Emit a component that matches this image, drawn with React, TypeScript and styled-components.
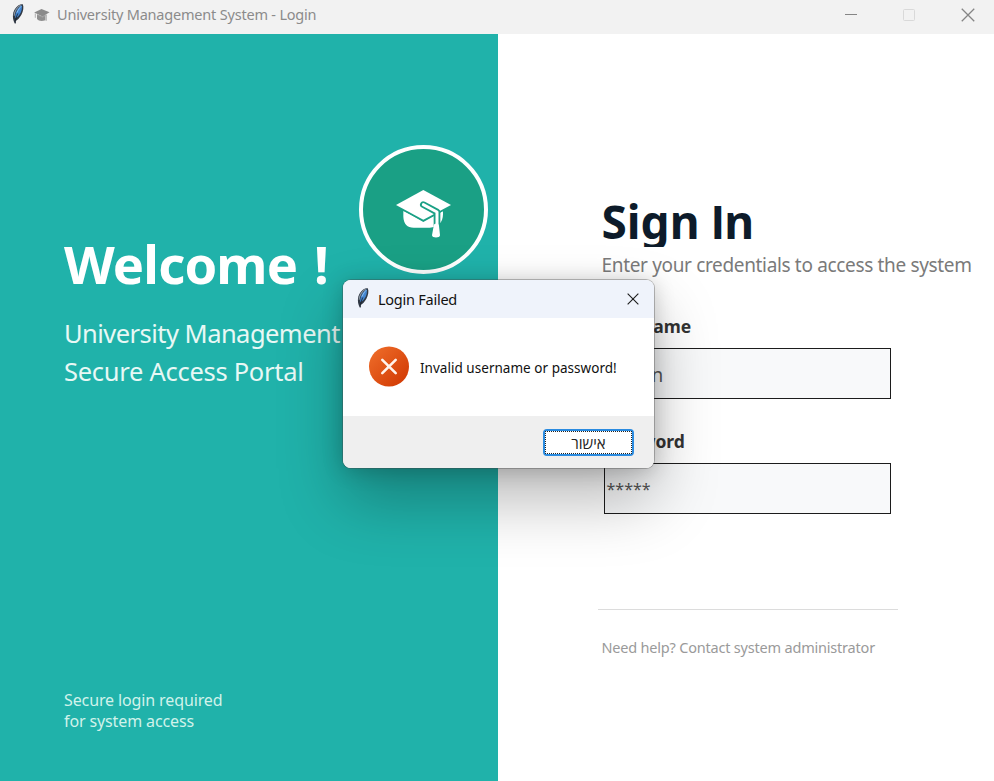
import React from "react";
import styled, { createGlobalStyle } from "styled-components";

const GlobalStyle = createGlobalStyle`
  * { box-sizing: border-box; }
  body { margin: 0; font-family: "Noto Sans", "Open Sans", sans-serif; overflow: hidden; }
  h1, h2, p { margin: 0; }
`;

const Window = styled.div`
  position: relative;
  display: flex;
  flex-direction: column;
  width: 994px;
  height: 781px;
  background: #fff;
`;

const TitleBar = styled.header`
  display: flex;
  flex: none;
  align-items: flex-start;
  height: 34px;
  padding: 0 19px 0 10px;
  background: #f2f2f2;
`;

const TitleIcon = styled.div<{ $top: number; $gap: number }>`
  display: flex;
  margin-top: ${(p) => p.$top}px;
  margin-right: ${(p) => p.$gap}px;
`;

const TitleText = styled.span`
  flex: 1;
  font-size: 14.5px;
  line-height: 29px;
  letter-spacing: -0.2px;
  color: #8b8b8b;
  white-space: nowrap;
`;

const WindowButtons = styled.div`
  display: flex;
  gap: 44px;
  margin-top: 8px;
`;

const Body = styled.main`
  display: flex;
  flex: 1;
  min-height: 0;
`;

const WelcomePanel = styled.section`
  display: flex;
  flex-direction: column;
  flex: none;
  width: 498px;
  padding: 111px 10px 49px 64px;
  background: #20b2aa;
`;

const WelcomeRow = styled.div`
  display: flex;
  align-items: flex-start;
`;

const WelcomeCopy = styled.div`
  flex: 1;
  min-width: 0;
  padding-top: 84px;
  white-space: nowrap;
`;

const WelcomeHeading = styled.h1`
  font-size: 52.5px;
  line-height: 70px;
  letter-spacing: -0.85px;
  word-spacing: 4px;
  color: #fff;
`;

const Tagline = styled.p`
  margin-top: 16px;
  font-size: 25.5px;
  line-height: 37.5px;
  color: #e8f8f5;
`;

const TaglineLine = styled.span<{ $track: number }>`
  display: block;
  letter-spacing: ${(p) => p.$track}px;
`;

const Crest = styled.div`
  display: flex;
  flex: none;
  align-items: center;
  justify-content: center;
  width: 129px;
  height: 129px;
  padding-top: 9px;
  border: 4px solid #fff;
  border-radius: 50%;
  background: #1aa085;
`;

const SecureNote = styled.p`
  margin-top: auto;
  font-size: 16px;
  line-height: 21px;
  letter-spacing: -0.12px;
  color: #d1f2eb;
`;

const SignInPanel = styled.section`
  display: flex;
  flex-direction: column;
  align-items: flex-start;
  padding: 166px 0 0 103.5px;
`;

const SignInHeading = styled.h2`
  height: 47px;
  overflow: hidden;
  font-size: 46px;
  line-height: 42px;
  color: #0d1b2a;
`;

const PlainCapital = styled.span`
  font-family: Inter, sans-serif;
  font-size: 45px;
`;

const Subtitle = styled.p`
  font-size: 19px;
  line-height: 36px;
  letter-spacing: -0.34px;
  color: #7a7a7a;
  white-space: nowrap;
`;

const Fields = styled.div`
  display: flex;
  flex-direction: column;
  margin-top: 30px;
`;

const Field = styled.label`
  display: flex;
  flex-direction: column;
  height: 115px;
  font-size: 17.5px;
  font-weight: 700;
  line-height: 26px;
  color: #333;
`;

const Entry = styled.div<{ $size: number; $top: number }>`
  width: 287px;
  height: 51px;
  margin: 9px 0 0 2px;
  padding: ${(p) => p.$top}px 0 0 2px;
  border: 1px solid #1c1c1c;
  background: #f8f9fa;
  font-size: ${(p) => p.$size}px;
  font-weight: 400;
  color: #555;
`;

const Divider = styled.div`
  width: 300px;
  height: 1px;
  margin: 66px 0 0 -4px;
  background: #dcdcdc;
`;

const Help = styled.p`
  margin-top: 25px;
  font-size: 14.5px;
  line-height: 25px;
  letter-spacing: -0.2px;
  color: #9a9a9a;
  white-space: nowrap;
`;

const Dialog = styled.div`
  position: absolute;
  left: 343px;
  top: 280px;
  display: flex;
  flex-direction: column;
  width: 311px;
  height: 188px;
  overflow: hidden;
  border-radius: 8px;
  background: #fff;
  box-shadow:
    0 0 0 1px rgba(70, 70, 70, 0.35),
    0 32px 64px rgba(0, 0, 0, 0.28),
    0 2px 21px rgba(0, 0, 0, 0.2);
`;

const DialogBar = styled.div`
  display: flex;
  align-items: flex-start;
  height: 38px;
  padding: 0 15px 0 12px;
  background: #eff3fb;
`;

const DialogTitle = styled.span`
  flex: 1;
  font-size: 14.5px;
  line-height: 38px;
  letter-spacing: -0.25px;
  color: #111;
`;

const DialogBody = styled.div`
  display: flex;
  align-items: center;
  flex: 1;
  gap: 11px;
  padding: 0 0 2px 26px;
  font-size: 13.5px;
  color: #111;
`;

const Message = styled.span`
  padding-top: 3px;
  line-height: 20px;
  letter-spacing: 0.03px;
  white-space: nowrap;
`;

const DialogFooter = styled.div`
  display: flex;
  justify-content: flex-end;
  height: 52px;
  padding: 13px 20px 0 0;
  background: #efefef;
`;

const OkButton = styled.button`
  width: 91px;
  height: 27px;
  padding: 0;
  border: 2px solid #2a8be0;
  border-radius: 4px;
  background: #fff;
  font: 15px "Open Sans", sans-serif;
  color: #222;
`;

const FocusRing = styled.span`
  display: flex;
  align-items: center;
  justify-content: center;
  height: 100%;
  border: 1px dotted #222;
`;

const Feather = () => (
  <svg width="16" height="22" viewBox="0 0 16 22">
    <path d="M4.8 20.5C2.4 16 2.2 10.4 4.8 6.2 6.8 2.8 10.2.8 12.8 1.2c1.2 2.5.5 7-1.4 10.5-1.6 3-4 5.3-5.6 6.1z" fill="#303844" />
    <path d="M5.2 15C5 10 7.2 4.8 11.8 2.2c.6 3.4-.4 6.8-2.4 9.6-1.2 1.8-2.8 3-4.2 3.2z" fill="#4385d0" />
    <path d="M4.2 12.8C4.1 8.8 7 4 10.8 2" stroke="#8a949f" strokeWidth="1.1" fill="none" />
    <path d="M7.8 10.5C7 12.5 5.7 15 5.3 20.5" stroke="#16202c" strokeWidth=".9" fill="none" />
    <path d="M7 9.6C8.4 6.6 9.6 4.8 11.3 3.2" stroke="#8cc0f0" strokeWidth="1" fill="none" />
  </svg>
);

const SmallCap = () => (
  <svg width="16" height="15" viewBox="0 0 16 15">
    <path d="M.2 4.6 7.5.9l8 3.3-6.9 4.3z" fill="#8a8a8a" />
    <path d="M3 6.3v4.8c1.6 2 5 2.4 8.4 1.1V6.7L8.6 8.6z" fill="#8f8f8f" />
    <path d="M3.2 6.6l5.4 2.6 4-2.3" stroke="#a8a8a8" strokeWidth=".6" fill="none" />
    <path d="M1.3 5.4v4.4" stroke="#b0b0b0" strokeWidth="1" />
    <path d="M12.2 6.8v6" stroke="#a9a9a9" strokeWidth="1.1" />
  </svg>
);

const GraduationCap = () => (
  <svg width="57" height="50" viewBox="135 162 171 150">
    <path d="M160 228v17c1 22 12 33 31 33h48c25 0 40-16 40-40v-10l-59 31z" fill="#fff" />
    <path d="M140 212l80 46 83-46" stroke="#1aa085" strokeWidth="5" fill="none" />
    <path d="M138 210l82-45 83 45-83 44z" fill="#fff" />
    <path d="M220 209l41 22v42" stroke="#1aa085" strokeWidth="20" strokeLinecap="round" strokeLinejoin="round" fill="none" />
    <path d="M220 209l41 22v42" stroke="#fff" strokeWidth="9" strokeLinecap="round" strokeLinejoin="round" fill="none" />
    <path d="M251 273c0-10 16-10 16 0l3 28c0 9-24 9-24 0z" fill="#fff" />
  </svg>
);

const Cross = ({ color, size }: { color: string; size: number }) => (
  <svg width={size} height={size} viewBox="0 0 13 13">
    <path d="M.7.7l11.6 11.6M12.3.7L.7 12.3" stroke={color} strokeWidth="1.2" />
  </svg>
);

const ErrorIcon = () => (
  <svg width="40" height="41" viewBox="0 0 40 41">
    <defs>
      <linearGradient id="errorFill" x1="0" y1="0" x2="1" y2="1">
        <stop offset="0" stopColor="#f0702c" />
        <stop offset="1" stopColor="#cf3500" />
      </linearGradient>
    </defs>
    <circle cx="20" cy="20.5" r="20" fill="url(#errorFill)" />
    <path d="M13.3 13.8l13.4 13.4M26.7 13.8L13.3 27.2" stroke="#fff3ec" strokeWidth="2.6" strokeLinecap="round" />
  </svg>
);

const CloseSlot = styled.div`
  display: flex;
  margin-top: 13px;
`;

export default function App() {
  return (
    <>
      <GlobalStyle />
      <Window>
        <TitleBar>
          <TitleIcon $top={3} $gap={8}><Feather /></TitleIcon>
          <TitleIcon $top={8} $gap={7}><SmallCap /></TitleIcon>
          <TitleText>University Management System - Login</TitleText>
          <WindowButtons>
            <svg width="14" height="14"><path d="M0 6.5h12" stroke="#858585" /></svg>
            <svg width="14" height="14"><rect x=".5" y="1.5" width="11" height="11" rx="1" fill="none" stroke="#d9d9d9" /></svg>
            <Cross color="#858585" size={14} />
          </WindowButtons>
        </TitleBar>
        <Body>
          <WelcomePanel>
            <WelcomeRow>
              <WelcomeCopy>
                <WelcomeHeading>Welcome !</WelcomeHeading>
                <Tagline>
                  <TaglineLine $track={-0.54}>University Management</TaglineLine>
                  <TaglineLine $track={-0.28}>Secure Access Portal</TaglineLine>
                </Tagline>
              </WelcomeCopy>
              <Crest><GraduationCap /></Crest>
            </WelcomeRow>
            <SecureNote>
              Secure login required
              <br />
              for system access
            </SecureNote>
          </WelcomePanel>
          <SignInPanel>
            <SignInHeading>Sign <PlainCapital>I</PlainCapital>n</SignInHeading>
            <Subtitle>Enter your credentials to access the system</Subtitle>
            <Fields>
              <Field>
                Username
                <Entry $size={19} $top={13}>admin</Entry>
              </Field>
              <Field>
                Password
                <Entry $size={16} $top={12}>*****</Entry>
              </Field>
            </Fields>
            <Divider />
            <Help>Need help? Contact system administrator</Help>
          </SignInPanel>
        </Body>
        <Dialog role="alertdialog">
          <DialogBar>
            <TitleIcon $top={7} $gap={7}><Feather /></TitleIcon>
            <DialogTitle>Login Failed</DialogTitle>
            <CloseSlot><Cross color="#1d1d1d" size={12} /></CloseSlot>
          </DialogBar>
          <DialogBody>
            <ErrorIcon />
            <Message>Invalid username or password!</Message>
          </DialogBody>
          <DialogFooter>
            <OkButton><FocusRing>אישור</FocusRing></OkButton>
          </DialogFooter>
        </Dialog>
      </Window>
    </>
  );
}
